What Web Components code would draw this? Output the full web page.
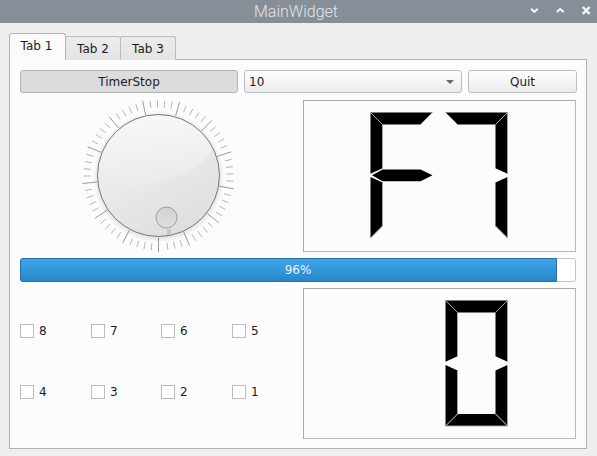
<!DOCTYPE html>
<html>
<head>
<meta charset="utf-8">
<title>MainWidget</title>
<style>
  html, body { margin: 0; padding: 0; }
  body { width: 597px; height: 456px; overflow: hidden; background: #efefef; font: 12px "DejaVu Sans", sans-serif; color: #1c1c1c; }
</style>
</head>
<body>
<main-widget></main-widget>
<script>
class TitleBar extends HTMLElement {
  constructor() {
    super();
    this.shadowDOM = this.attachShadow({mode: 'open'});
  }

  connectedCallback() {
    this.shadowDOM.innerHTML = `
      <style>
      :host { display: grid; grid-template-columns: 1fr auto 1fr; align-items: center; height: 23px; padding-right: 5px; background: #868e98; }
      .title { font: 300 16px Roboto, sans-serif; color: #e4e6e9; line-height: 23px; }
      .actions { justify-self: end; display: flex; }
      svg { display: block; }
      </style>
      <span></span>
      <span class="title"><slot></slot></span>
      <div class="actions">
        <svg width="70" height="23" viewBox="0 0 70 23" fill="none" stroke="#f4f5f6" stroke-width="2">
          <path d="M9 8.800l3.400 3 3.400-3"/>
          <path d="M34.700 12l3.500-3 3.500 3"/>
          <path d="M60.800 7l6.800 6.800M67.600 7l-6.800 6.800" stroke-width="2.400"/>
        </svg>
      </div>
    `;
  }
}

class TabHeader extends HTMLElement {
  constructor() {
    super();
    this.shadowDOM = this.attachShadow({mode: 'open'});
  }

  connectedCallback() {
    this.shadowDOM.innerHTML = `
      <style>
      :host { display: block; box-sizing: border-box; height: 24px; width: 56px; margin-right: -1px; padding-top: 5px; text-align: center; background: linear-gradient(#ececec, #e4e4e4); border: 1px solid #bdbdbd; border-bottom: 0; border-radius: 3px 3px 0 0; }
      :host([active]) { position: relative; z-index: 1; height: 27px; width: 57px; padding: 5px 2px 0 0; background: #fbfbfb; border-color: #b4b4b4; }
      </style>
      <slot></slot>
    `;
  }
}

class PushButton extends HTMLElement {
  constructor() {
    super();
    this.shadowDOM = this.attachShadow({mode: 'open'});
  }

  connectedCallback() {
    this.shadowDOM.innerHTML = `
      <style>
      :host { display: flex; align-items: center; justify-content: center; box-sizing: border-box; height: 23px; background: linear-gradient(#fdfdfd, #ececec); border: 1px solid #bcbcbc; border-radius: 3px; }
      :host([down]) { background: #dcdcdc; border-color: #b4b4b4; }
      </style>
      <slot></slot>
    `;
  }
}

class ComboBox extends HTMLElement {
  constructor() {
    super();
    this.shadowDOM = this.attachShadow({mode: 'open'});
  }

  connectedCallback() {
    this.shadowDOM.innerHTML = `
      <style>
      :host { display: flex; align-items: center; justify-content: space-between; box-sizing: border-box; height: 23px; padding: 0 7px 0 4px; background: linear-gradient(#fdfdfd, #ececec); border: 1px solid #bcbcbc; border-radius: 3px; }
      .arrow { width: 0; height: 0; border: 4px solid transparent; border-top: 4px solid #6a6a6a; border-bottom: 0; }
      </style>
      <span><slot></slot></span>
      <span class="arrow"></span>
    `;
  }
}

class DialKnob extends HTMLElement {
  constructor() {
    super();
    this.shadowDOM = this.attachShadow({mode: 'open'});
  }

  connectedCallback() {
    this.render();
  }

  // ticks run backwards from the bottom, a long one every 5
  get ticks() {
    let out = '';
    for (let k = 0; k < 64; k++) {
      const a = k * 5.6 * Math.PI / 180;
      const big = k % 5 === 0;
      const r1 = big ? 62 : 68, r2 = big ? 76.5 : 75;
      const sx = -Math.sin(a), cy = Math.cos(a);
      out += `<line x1="${(138.5 + sx * r1).toFixed(2)}" y1="${(75.5 + cy * r1).toFixed(2)}" x2="${(138.5 + sx * r2).toFixed(2)}" y2="${(75.5 + cy * r2).toFixed(2)}" stroke="${big ? '#9a9a9a' : '#b4b4b4'}"/>`;
    }
    return out;
  }

  render() {
    this.shadowDOM.innerHTML = `
      <style>
      :host { display: block; width: 277px; height: 152px; }
      svg { display: block; }
      </style>
      <svg width="277" height="152" viewBox="0 0 277 152">
        <defs>
          <linearGradient id="face" x1="0.2" y1="0" x2="0.7" y2="1">
            <stop offset="0" stop-color="#f4f4f4"/>
            <stop offset="1" stop-color="#dedede"/>
          </linearGradient>
          <linearGradient id="gloss" x1="0" y1="0" x2="0" y2="1">
            <stop offset="0" stop-color="#fafafa"/>
            <stop offset="1" stop-color="#ececec"/>
          </linearGradient>
          <linearGradient id="knob" x1="0" y1="0" x2="0" y2="1">
            <stop offset="0" stop-color="#d2d2d2"/>
            <stop offset="1" stop-color="#e0e0e0"/>
          </linearGradient>
          <radialGradient id="halo" cx="0.5" cy="0.5" r="0.5">
            <stop offset="0.9" stop-color="#000" stop-opacity="0.1"/>
            <stop offset="1" stop-color="#000" stop-opacity="0"/>
          </radialGradient>
        </defs>
        ${this.ticks}
        <circle cx="138.5" cy="77" r="66" fill="url(#halo)"/>
        <circle cx="138.5" cy="75.5" r="61" fill="url(#face)"/>
        <path d="M78 78A61 61 0 0 1 193 48C178 78 110 96 78 78Z" fill="url(#gloss)" opacity="0.7"/>
        <circle cx="138.500" cy="75.500" r="61" fill="none" stroke="#777"/>
        <rect x="147" y="129" width="4" height="6" fill="#c8c8c8"/>
        <circle cx="146.500" cy="117.500" r="10.500" fill="url(#knob)" stroke="#9c9c9c"/>
      </svg>
    `;
  }
}

class LcdNumber extends HTMLElement {
  constructor() {
    super();
    this.shadowDOM = this.attachShadow({mode: 'open'});
  }

  connectedCallback() {
    this.render();
  }

  // one seven segment digit: black fill, grey only on the edges that get the shadow
  digit(code) {
    const segs = {
      a: {p: [[0, 0], [62, 0], [50, 12], [12, 12]], grey: [1, 3]},
      b: {p: [[62, 0], [62, 61.3], [50, 55.7], [50, 12]], grey: [0, 3]},
      c: {p: [[62, 64.5], [50, 70], [50, 113.5], [62, 125.5], ], grey: [2, 3]},
      d: {p: [[0, 125.5], [12, 113.5], [50, 113.5], [62, 125.5]], grey: [0, 2, 3]},
      e: {p: [[0, 64.5], [12, 70], [12, 113.5], [0, 125.5]], grey: [1, 2]},
      f: {p: [[0, 0], [0, 61.3], [12, 55.7], [12, 12]], grey: [2, 3]},
      g: {p: [[1.5, 62.8], [12, 57], [50, 57], [62, 62.8], [50, 68.7], [12, 68.7]], grey: []}
    };
    const on = {'F': 'aefg', '7': 'abc', '0': 'abcdef'}[code] || '';
    return [...on].map((s) => {
      const {p, grey} = segs[s];
      const pts = p.map((q) => q.join(',')).join(' ');
      const lines = grey.map((i) => {
        const a = p[i], b = p[(i + 1) % p.length];
        return `<line x1="${a[0]}" y1="${a[1]}" x2="${b[0]}" y2="${b[1]}" stroke="#a4a4a4"/>`;
      }).join('');
      return `<polygon points="${pts}" fill="#000"/>${lines}`;
    }).join('');
  }

  render() {
    const text = this.getAttribute('value') || '';
    const chars = text.padStart(2, ' ');
    this.shadowDOM.innerHTML = `
      <style>
      :host { display: block; box-sizing: border-box; width: 274px; border: 1px solid #a9a9a9; border-right-color: #b9b9b9; border-bottom-color: #b9b9b9; overflow: hidden; }
      svg { display: block; }
      </style>
      <svg width="272" height="150" viewBox="0 0 272 150" role="img" aria-label="${text}">
        <g transform="translate(66.500 11.500)">${this.digit(chars[0])}</g>
        <g transform="translate(141.500 11.500)">${this.digit(chars[1])}</g>
      </svg>
    `;
  }
}

class ProgressBar extends HTMLElement {
  constructor() {
    super();
    this.shadowDOM = this.attachShadow({mode: 'open'});
  }

  connectedCallback() {
    const value = this.getAttribute('value');
    this.shadowDOM.innerHTML = `
      <style>
      :host { display: block; flex: none; position: relative; box-sizing: border-box; height: 24px; background: #fff; border: 1px solid #c4c4c4; border-radius: 3px; text-align: center; line-height: 22px; color: #eef5fb; }
      .chunk { position: absolute; left: -1px; top: -1px; bottom: -1px; box-sizing: border-box; width: calc(${value}% + 5px); background: linear-gradient(#3ea6ec, #2b86c9); border: 1px solid #2a6f9f; border-radius: 3px 0 0 3px; }
      .label { position: relative; }
      </style>
      <div class="chunk"></div>
      <span class="label">${value}%</span>
    `;
  }
}

class CheckItem extends HTMLElement {
  constructor() {
    super();
    this.shadowDOM = this.attachShadow({mode: 'open'});
  }

  connectedCallback() {
    this.shadowDOM.innerHTML = `
      <style>
      :host { display: flex; align-items: center; gap: 5px; }
      .box { box-sizing: border-box; width: 14px; height: 14px; background: #fff; border: 1px solid #bcbcbc; }
      </style>
      <span class="box"></span>
      <span><slot></slot></span>
    `;
  }
}

class MainWidget extends HTMLElement {
  constructor() {
    super();
    this.shadowDOM = this.attachShadow({mode: 'open'});
  }

  connectedCallback() {
    this.shadowDOM.innerHTML = `
      <style>
      :host { display: block; height: 456px; }
      .body { padding: 11px 10px 7px 9px; }
      .tabs { display: flex; align-items: flex-end; height: 26px; margin-bottom: -1px; }
      .pane { display: flex; flex-direction: column; gap: 6px; box-sizing: border-box; height: 390px; padding: 10px 10px 9px; background: #fcfcfc; border: 1px solid #b2b2b2; }
      .top { flex: none; display: grid; grid-template-columns: 218px 218px 109px; gap: 6px; height: 24px; align-items: start; }
      .row { flex: none; display: flex; gap: 6px; height: 152px; }
      .row.low { height: 151px; }
      .checks { width: 277px; box-sizing: border-box; padding-bottom: 4px; display: grid; grid-template-columns: 71px 70px 71px 65px; grid-auto-rows: 61px; align-content: center; }
      </style>
      <title-bar>MainWidget</title-bar>
      <div class="body">
        <div class="tabs">
          <tab-header active>Tab 1</tab-header>
          <tab-header>Tab 2</tab-header>
          <tab-header>Tab 3</tab-header>
        </div>
        <div class="pane">
          <div class="top">
            <push-button down>TimerStop</push-button>
            <combo-box>10</combo-box>
            <push-button>Quit</push-button>
          </div>
          <div class="row">
            <dial-knob></dial-knob>
            <lcd-number value="F7"></lcd-number>
          </div>
          <progress-bar value="96"></progress-bar>
          <div class="row low">
            <div class="checks">
              <check-item>8</check-item>
              <check-item>7</check-item>
              <check-item>6</check-item>
              <check-item>5</check-item>
              <check-item>4</check-item>
              <check-item>3</check-item>
              <check-item>2</check-item>
              <check-item>1</check-item>
            </div>
            <lcd-number value="0"></lcd-number>
          </div>
        </div>
      </div>
    `;
  }
}

customElements.define('title-bar', TitleBar);
customElements.define('tab-header', TabHeader);
customElements.define('push-button', PushButton);
customElements.define('combo-box', ComboBox);
customElements.define('dial-knob', DialKnob);
customElements.define('lcd-number', LcdNumber);
customElements.define('progress-bar', ProgressBar);
customElements.define('check-item', CheckItem);
customElements.define('main-widget', MainWidget);
</script>
</body>
</html>
